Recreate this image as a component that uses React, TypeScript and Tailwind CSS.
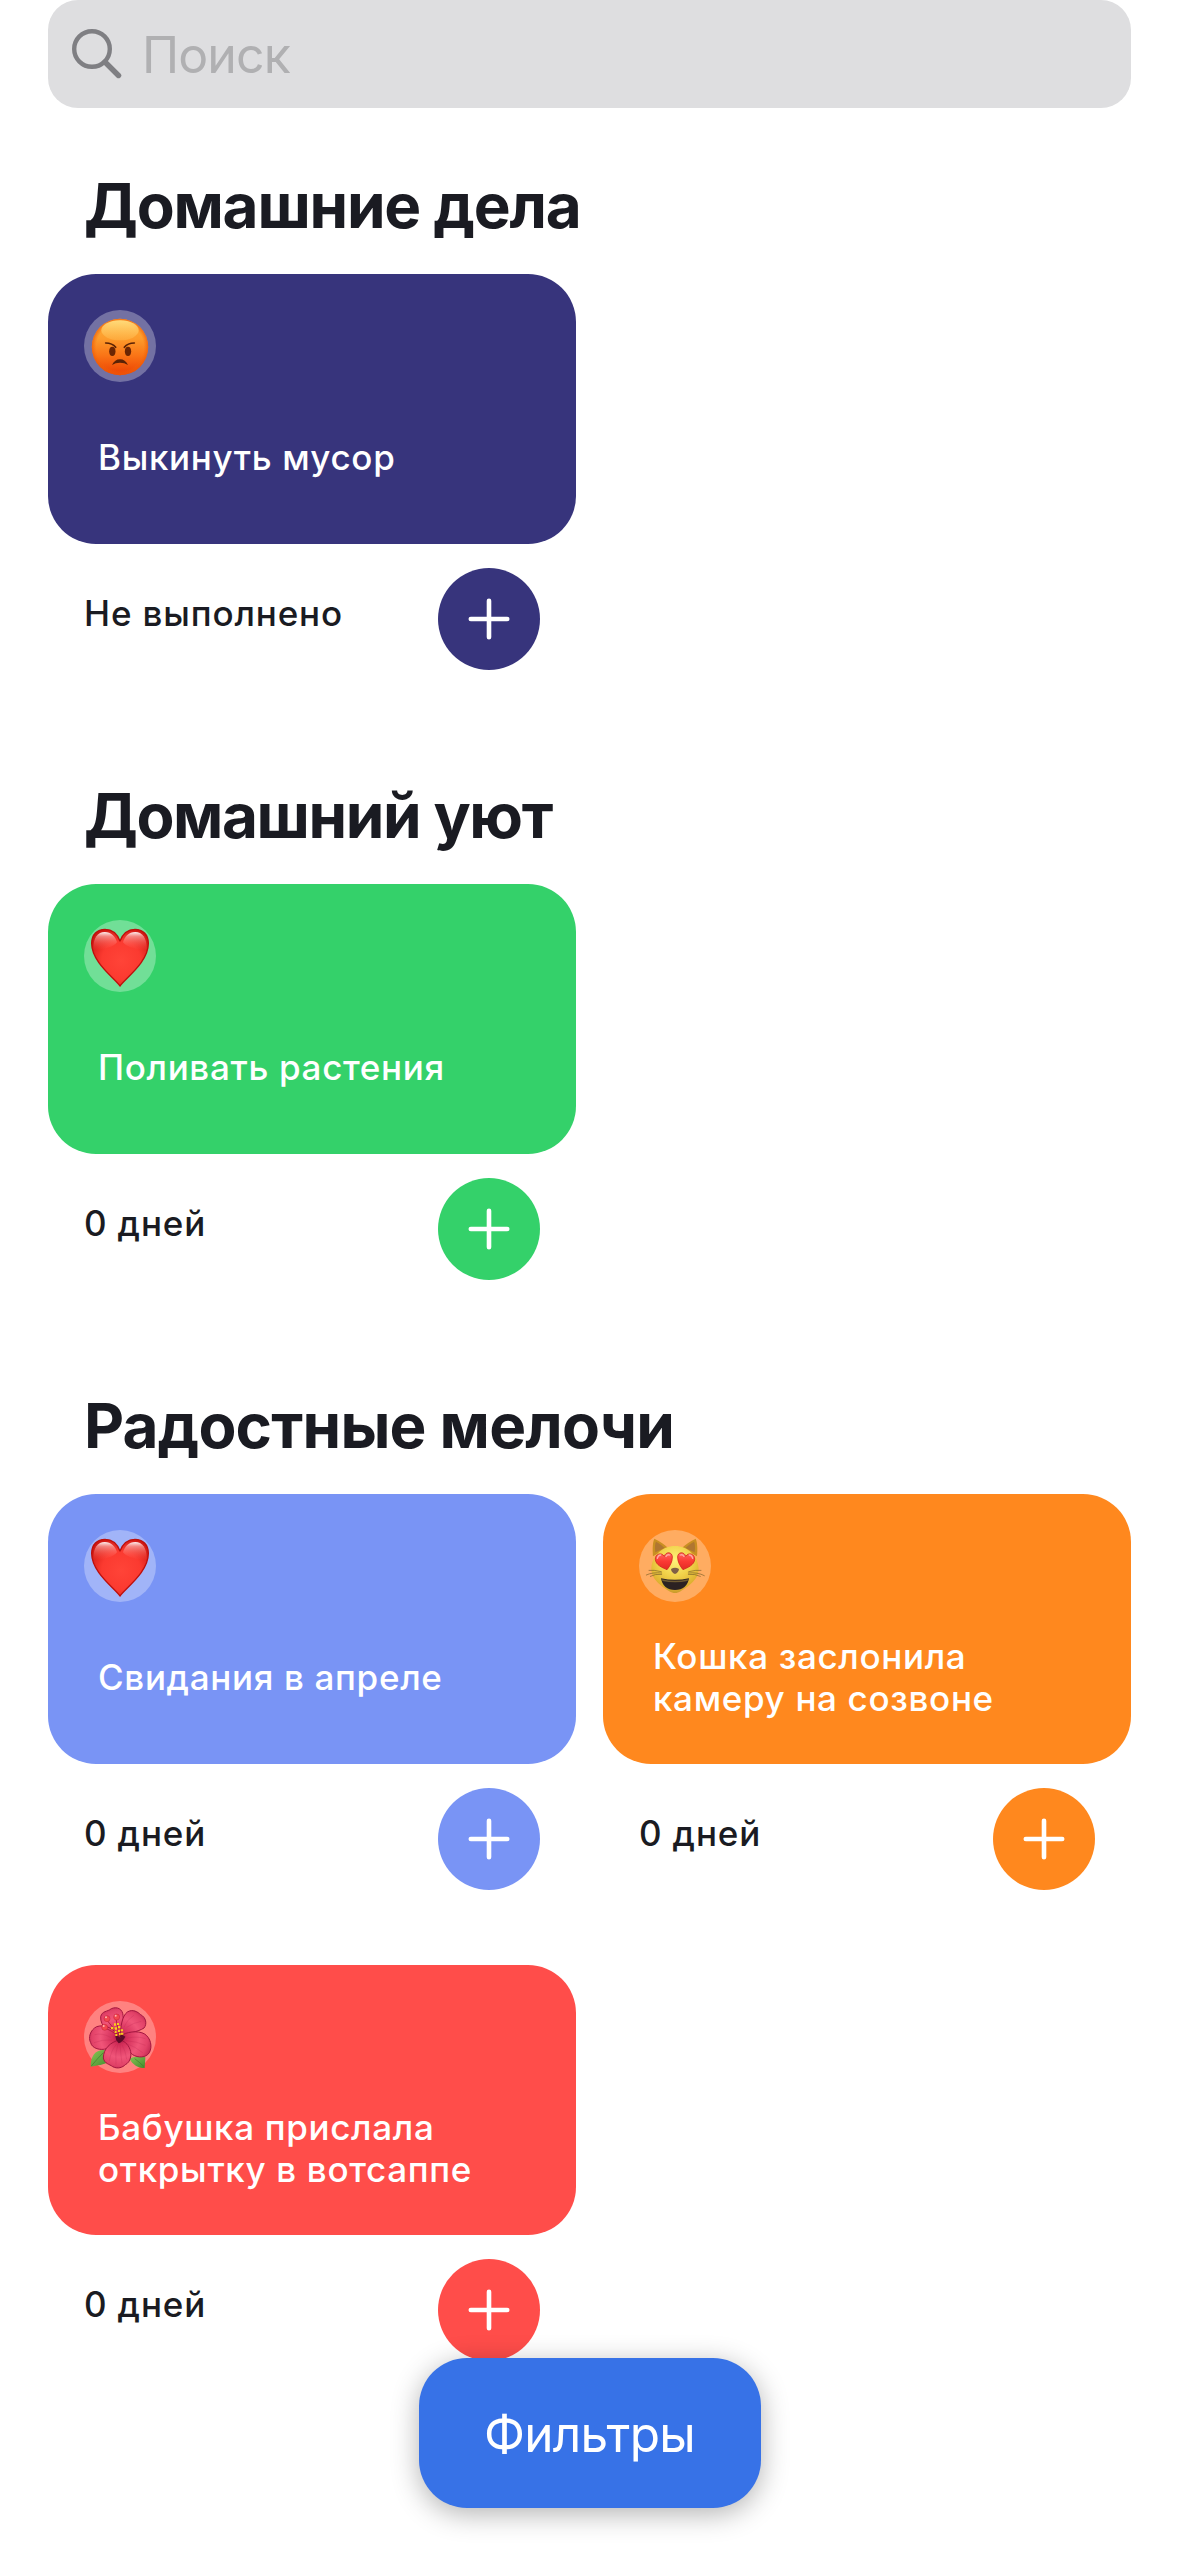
import React from "react";

const FONT = "font-['Inter','Liberation_Sans',sans-serif]";

function Angry() {
  return (
    <svg viewBox="42 45 216 216" className="size-full overflow-visible">
      <defs>
        <linearGradient id="angryFace" x1="0" y1="0" x2="0" y2="1">
          <stop offset="0" stopColor="#ffb13c" />
          <stop offset="0.35" stopColor="#fd9c2c" />
          <stop offset="0.65" stopColor="#fa7416" />
          <stop offset="1" stopColor="#ea3f02" />
        </linearGradient>
        <radialGradient id="angryRim" cx="0.5" cy="0.5" r="0.5">
          <stop offset="0.84" stopColor="#f26a0a" stopOpacity="0" />
          <stop offset="1" stopColor="#ee5a06" stopOpacity="0.75" />
        </radialGradient>
        <linearGradient id="angryShine" x1="0" y1="0" x2="0" y2="1">
          <stop offset="0" stopColor="#ffdb7a" />
          <stop offset="1" stopColor="#ffc056" stopOpacity="0.35" />
        </linearGradient>
      </defs>
      <circle cx="150" cy="156" r="84.5" fill="url(#angryFace)" />
      <circle cx="150" cy="156" r="84.5" fill="url(#angryRim)" />
      <ellipse cx="150" cy="106" rx="56" ry="30" fill="url(#angryShine)" />
      <path d="M107 144q20 0 30 13" fill="none" stroke="#5a2205" strokeWidth="5" strokeLinecap="round" />
      <path d="M193 144q-20 0-30 13" fill="none" stroke="#5a2205" strokeWidth="5" strokeLinecap="round" />
      <ellipse cx="127" cy="169" rx="9.5" ry="14" fill="#6b2503" />
      <ellipse cx="174" cy="169" rx="9.5" ry="14" fill="#6b2503" />
      <path d="M126 210q8-17 24-17t24 17q-10-7-24-7t-24 7z" fill="#5a2205" />
    </svg>
  );
}

function Heart({ id }: { id: string }) {
  const shape = "M150 243C132 218 65 172 65 115C65 88 82 73 105 73C126 73 142 87 150 108C158 87 174 73 195 73C218 73 235 88 235 115C235 172 168 218 150 243Z";
  return (
    <svg viewBox="42 45 216 216" className="size-full overflow-visible">
      <defs>
        <radialGradient id={id + "b"} cx="0.52" cy="0.55" r="0.62">
          <stop offset="0" stopColor="#ff4438" />
          <stop offset="0.55" stopColor="#fb3a30" />
          <stop offset="1" stopColor="#cf1813" />
        </radialGradient>
        <linearGradient id={id + "s"} x1="0" y1="0" x2="0" y2="1">
          <stop offset="0" stopColor="#fff" stopOpacity="0.95" />
          <stop offset="0.25" stopColor="#ffc4c0" stopOpacity="0.6" />
          <stop offset="0.6" stopColor="#ff8880" stopOpacity="0.35" />
          <stop offset="1" stopColor="#ff6058" stopOpacity="0" />
        </linearGradient>
      </defs>
      <path d={shape} fill={"url(#" + id + "b)"} stroke="#bd0f0c" strokeWidth="4" strokeLinejoin="round" />
      <path d="M71 134C68 98 84 81 104 81C124 81 136 94 141 112C132 126 90 138 71 134Z" fill={"url(#" + id + "s)"} />
      <path d="M229 134C232 98 216 81 196 81C176 81 164 94 159 112C168 126 210 138 229 134Z" fill={"url(#" + id + "s)"} />
    </svg>
  );
}

function EyeHeart({ flip }: { flip?: boolean }) {
  return (
    <g transform={flip ? "translate(300 0) scale(-1 1)" : undefined}>
      <path d="M126 164C112 158 92 150 91 133C90 118 108 110 118 124C122 109 142 110 142 126C142 142 134 154 126 164Z" fill="url(#catHeart)" stroke="#d2261f" strokeWidth="2.5" />
      <path d="M97 130q2-10 10-10M123 124q4-7 11-4" fill="none" stroke="#ffaaa6" strokeWidth="4" strokeLinecap="round" />
    </g>
  );
}

function Cat() {
  return (
    <svg viewBox="42 45 216 216" className="size-full overflow-visible">
      <defs>
        <radialGradient id="catFace" cx="0.5" cy="0.3" r="0.72">
          <stop offset="0" stopColor="#fff27a" />
          <stop offset="0.5" stopColor="#f0d048" />
          <stop offset="0.85" stopColor="#dcae2e" />
          <stop offset="1" stopColor="#c4942a" />
        </radialGradient>
        <linearGradient id="catHeart" x1="0" y1="0" x2="0" y2="1">
          <stop offset="0" stopColor="#ff6a62" />
          <stop offset="0.5" stopColor="#fb3a34" />
          <stop offset="1" stopColor="#e32a25" />
        </linearGradient>
      </defs>
      <path d="M84 124C82 100 83 82 88 71C104 78 118 88 130 100Z" fill="#c98f22" />
      <path d="M216 124C218 100 217 82 212 71C196 78 182 88 170 100Z" fill="#c98f22" />
      <path d="M91 112C89 96 90 86 93 80C104 86 112 92 119 99Z" fill="#b07631" />
      <path d="M209 112C211 96 210 86 207 80C196 86 188 92 181 99Z" fill="#b07631" />
      <path d="M150 93C190 93 220 124 221 162C221 196 184 217 167 229C156 236 144 236 133 229C116 217 79 196 79 162C80 124 110 93 150 93Z" fill="url(#catFace)" />
      <g fill="none" stroke="#7b6128" strokeWidth="2" strokeLinecap="round">
        <path d="M109 170Q85 164 72 166M110 174Q82 171 64 180M110 178Q90 176 76 184" />
        <path d="M191 170Q215 164 228 166M190 174Q218 171 238 182M190 178Q210 176 226 184" />
      </g>
      <EyeHeart />
      <EyeHeart flip />
      <path d="M138 162Q150 154 162 162Q161 173 150 177Q139 173 138 162Z" fill="#806046" />
      <path d="M108 190Q150 199 192 190Q186 225 150 225Q114 225 108 190Z" fill="#2b2222" />
      <path d="M111 193Q150 202 189 193L188 198Q150 206 112 198Z" fill="#6f5b31" />
    </svg>
  );
}

function Hibiscus() {
  return (
    <svg viewBox="42 33 216 216" className="size-full overflow-visible">
      <defs>
        <radialGradient id="petal" gradientUnits="userSpaceOnUse" cx="150" cy="143" r="98">
          <stop offset="0" stopColor="#9c1440" />
          <stop offset="0.22" stopColor="#d42f5a" />
          <stop offset="0.6" stopColor="#f05579" />
          <stop offset="0.85" stopColor="#e24268" />
          <stop offset="1" stopColor="#c62c54" />
        </radialGradient>
        <linearGradient id="leaf" x1="0" y1="0" x2="1" y2="1">
          <stop offset="0" stopColor="#8cc653" />
          <stop offset="1" stopColor="#3f8a2f" />
        </linearGradient>
      </defs>
      <path d="M62 230C62 198 76 178 104 180L118 214C102 226 82 226 62 230Z" fill="url(#leaf)" />
      <path d="M64 228Q82 206 100 188" stroke="#3f7a2a" strokeWidth="2" fill="none" />
      <path d="M178 206C200 196 220 196 226 202L224 234C204 234 188 224 178 206Z" fill="url(#leaf)" />
      <path d="M222 230Q208 216 194 206" stroke="#3f7a2a" strokeWidth="2" fill="none" />
      <g fill="url(#petal)" stroke="#a3163f" strokeWidth="3" strokeLinejoin="round">
        <path d="M150 142C118 128 90 110 92 80C96 62 112 66 124 56C142 48 158 58 159 76C162 100 158 124 150 142Z" />
        <path d="M150 140C152 110 156 78 172 66C188 56 204 66 212 74C228 82 232 102 222 114C204 126 176 128 150 140Z" />
        <path d="M148 146C134 114 104 102 80 110C60 120 54 144 62 158C66 176 92 182 110 176C128 170 142 160 148 146Z" />
        <path d="M152 138C166 126 204 120 224 132C242 144 248 170 238 188C228 204 204 204 188 194C172 182 158 160 152 138Z" />
        <path d="M148 150C122 156 100 176 100 204C104 222 118 222 128 230C144 238 158 232 166 224C182 216 186 194 180 178C174 162 162 152 148 150Z" />
      </g>
      <g fill="none" stroke="#b3204a" strokeWidth="1.5" opacity="0.4">
        <path d="M140 162Q122 182 118 214M144 162Q134 190 138 224M150 162Q152 192 156 220M156 164Q168 186 170 208" />
        <path d="M168 152Q200 154 226 166M168 160Q196 170 218 188M172 144Q204 138 226 146" />
        <path d="M126 150Q96 148 72 158M122 142Q96 128 74 134M162 112Q172 88 192 76M170 112Q190 98 214 94" />
      </g>
      <path d="M136 138Q150 128 166 140Q158 156 146 160Q136 150 136 138Z" fill="#5c0a28" />
      <path d="M150 142Q128 110 112 92M148 138Q142 104 138 88M146 138Q124 122 106 114" stroke="#b51e40" strokeWidth="3" fill="none" />
      <g fill="#f2474e" stroke="#c31f38" strokeWidth="1.5">
        <circle cx="111" cy="86" r="9" />
        <circle cx="140" cy="81" r="9" />
        <circle cx="104" cy="112" r="9" />
      </g>
      <g fill="#ffb3ae">
        <circle cx="108" cy="82" r="3" />
        <circle cx="137" cy="77" r="3" />
        <circle cx="101" cy="108" r="3" />
      </g>
      <path
        fill="#f8cf1c"
        d="M123 111h7v7h-7zM132 100h6v7h-6zM141 99h6v6h-6zM134 112h7v7h-7zM144 108h7v7h-7zM152 118h7v6h-7zM134 122h6v7h-6zM144 119h6v7h-6zM153 128h7v6h-7zM136 132h6v6h-6zM147 129h5v7h-5z"
      />
    </svg>
  );
}

interface Tracker {
  title: string;
  status: string;
  color: string;
  icon: React.ReactNode;
}

const sections: { title: string; tracking: string; items: Tracker[] }[] = [
  {
    title: "Домашние дела",
    tracking: "tracking-[-1.2px]",
    items: [{ title: "Выкинуть мусор", status: "Не выполнено", color: "bg-[#37347c]", icon: <Angry /> }],
  },
  {
    title: "Домашний уют",
    tracking: "tracking-[-1.4px]",
    items: [{ title: "Поливать растения", status: "0 дней", color: "bg-[#34d16a]", icon: <Heart id="h1" /> }],
  },
  {
    title: "Радостные мелочи",
    tracking: "tracking-[-0.8px]",
    items: [
      { title: "Свидания в апреле", status: "0 дней", color: "bg-[#7994f5]", icon: <Heart id="h2" /> },
      { title: "Кошка заслонила камеру на созвоне", status: "0 дней", color: "bg-[#ff881e]", icon: <Cat /> },
      { title: "Бабушка прислала открытку в вотсаппе", status: "0 дней", color: "bg-[#ff4d4a]", icon: <Hibiscus /> },
    ],
  },
];

function TrackerCard({ title, status, color, icon }: Tracker) {
  return (
    <article className="h-[444px]">
      <div className={`h-[270px] rounded-[48px] px-9 pt-9 ${color}`}>
        <div className="size-[72px] rounded-full bg-white/30">{icon}</div>
        <div className="mt-[33px] flex h-[84px] items-center pl-[14px]">
          <p className="w-[400px] text-[35px] leading-[42px] font-medium tracking-[0.66px] text-white">{title}</p>
        </div>
      </div>
      <div className="flex items-start justify-between px-9 pt-6">
        <span className="mt-6 text-[35px] leading-[42px] font-medium tracking-[0.85px] text-[#1a1b22]">{status}</span>
        <button className={`flex size-[102px] items-center justify-center rounded-full ${color}`}>
          <svg viewBox="0 0 42 42" className="size-[42px]" stroke="white" strokeWidth="4.6" strokeLinecap="round">
            <path d="M21 2.8v36.4M2.8 21h36.4" />
          </svg>
        </button>
      </div>
    </article>
  );
}

export default function App() {
  return (
    <div className={`relative h-[2556px] w-[1179px] overflow-hidden bg-white px-12 ${FONT}`}>
      <div className="flex h-[108px] items-center rounded-[30px] bg-[#dedee0] pl-6">
        <svg viewBox="0 0 50 50" className="size-[50px]" fill="none" stroke="#7f7f83" strokeWidth="4.4" strokeLinecap="round">
          <circle cx="20" cy="20" r="17.8" />
          <path d="M33 33L46.5 46.5" strokeWidth="5.4" />
        </svg>
        <span className="pt-0.5 pl-[20px] text-[50px] leading-[60px] tracking-[-0.9px] text-[#b0b0b2]">Поиск</span>
      </div>
      {sections.map((s) => (
        <section key={s.title} className="h-[610px]">
          <h2 className={`pt-[60px] pl-9 text-[62px] leading-[76px] font-bold text-[#1a1b22] ${s.tracking}`}>{s.title}</h2>
          <div className="mt-[30px] grid grid-cols-2 gap-[27px]">
            {s.items.map((t) => (
              <TrackerCard key={t.title} {...t} />
            ))}
          </div>
        </section>
      ))}
      <div className="absolute inset-x-0 bottom-12 flex justify-center">
        <button className="h-[150px] w-[342px] rounded-[48px] bg-[#3772e7] pt-0.5 text-[49.5px] tracking-[-0.7px] text-white shadow-[0_6px_28px_rgba(0,0,0,0.3)]">
          Фильтры
        </button>
      </div>
    </div>
  );
}
